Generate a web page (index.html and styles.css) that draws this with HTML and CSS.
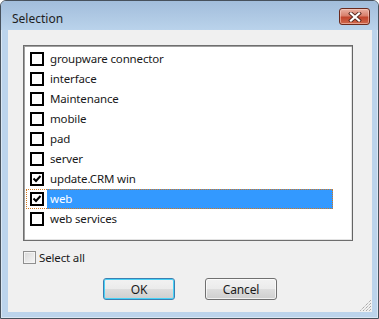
FILE: index.html
```html
<!DOCTYPE html>
<html lang="en">

<head>
    <meta charset="UTF-8">
    <title>Selection</title>
    <link rel="stylesheet" href="styles.css">
</head>

<body>
    <div class="window">
        <div class="titlebar">
            <span class="title">Selection</span>
            <button type="button" class="close-btn">
                <svg width="14" height="10" viewBox="0 0 14 10">
                    <path d="M3 1.5 L11 8.5 M11 1.5 L3 8.5" stroke="#5a2a20" stroke-width="4" stroke-linecap="square" />
                    <path d="M3 1.5 L11 8.5 M11 1.5 L3 8.5" stroke="#ffffff" stroke-width="2.2" stroke-linecap="square" />
                </svg>
            </button>
        </div>

        <div class="client">
            <!-- checked list -->
            <div class="listbox">
                <div class="row"><span class="box"></span><span class="label">groupware connector</span></div>
                <div class="row"><span class="box"></span><span class="label">interface</span></div>
                <div class="row"><span class="box"></span><span class="label">Maintenance</span></div>
                <div class="row"><span class="box"></span><span class="label">mobile</span></div>
                <div class="row"><span class="box"></span><span class="label">pad</span></div>
                <div class="row"><span class="box"></span><span class="label">server</span></div>
                <div class="row">
                    <span class="box">
                        <svg width="10" height="10" viewBox="0 0 10 10"><path d="M1.5 4.5 L4 7 L8.5 2" stroke="#000" stroke-width="2" fill="none" /></svg>
                    </span>
                    <span class="label">update.CRM win</span>
                </div>
                <div class="row selected">
                    <span class="box">
                        <svg width="10" height="10" viewBox="0 0 10 10"><path d="M1.5 4.5 L4 7 L8.5 2" stroke="#000" stroke-width="2" fill="none" /></svg>
                    </span>
                    <span class="label">web</span>
                </div>
                <div class="row"><span class="box"></span><span class="label">web services</span></div>
            </div>

            <label class="select-all">
                <span class="small-box"></span>
                <span>Select all</span>
            </label>

            <div class="buttons">
                <button type="button" class="btn default">OK</button>
                <button type="button" class="btn">Cancel</button>
            </div>

            <svg class="grip" width="12" height="12" viewBox="0 0 12 12">
                <path d="M11 3 L3 11 M11 6 L6 11 M11 9 L9 11 M11 0 L0 11" stroke="#8a8a8a" stroke-width="1" stroke-dasharray="1 1" />
            </svg>
        </div>
    </div>
</body>

</html>
```

FILE: styles.css
```css
* {
    box-sizing: border-box;
}

body {
    margin: 0;
    background: #ffffff;
    font-family: 'Noto Sans', 'DejaVu Sans', sans-serif;
    font-size: 11.5px;
    letter-spacing: -0.15px;
    color: #1a1a1a;
}

.window {
    width: 379px;
    height: 319px;
    border: 1px solid #47515c;
    border-radius: 6px 6px 0 0;
    background: #bcd4ec;
    box-shadow: inset 0 0 0 1px rgba(255, 255, 255, 0.45);
    padding: 0 6px 6px 7px;
    display: flex;
    flex-direction: column;
}

.titlebar {
    height: 29px;
    margin: 0 -6px 0 -7px;
    padding: 0 8px 0 11px;
    border-radius: 5px 5px 0 0;
    background: linear-gradient(#a2bddb, #bad3eb);
    display: flex;
    align-items: center;
    justify-content: space-between;
}

.title {
    font-size: 12px;
    letter-spacing: 0;
    color: #1e1e1e;
    margin-top: 5px;
}

.close-btn {
    width: 31px;
    height: 17px;
    margin-top: 2px;
    padding: 0;
    border: 1px solid #6b2a1d;
    border-radius: 3px;
    background: linear-gradient(#eab1a3 0%, #d8806c 45%, #c2452d 55%, #cf6a4e 100%);
    box-shadow: inset 0 0 0 1px rgba(255, 220, 210, 0.5);
    display: flex;
    align-items: center;
    justify-content: center;
}

.client {
    flex: 1;
    position: relative;
    background: #f0f0f0;
    padding: 15px 18px 0 15px;
    display: flex;
    flex-direction: column;
}

.listbox {
    width: 330px;
    height: 196px;
    background: #ffffff;
    border: 1px solid #6e6e6e;
    border-right-color: #646464;
    box-shadow: inset 1px 1px 0 #a0a0a0, inset -1px -1px 0 #e3e3e3;
    padding: 3px 0 0 2px;
}

.row {
    width: 307px;
    height: 20px;
    display: flex;
    align-items: center;
}

.box {
    width: 14px;
    height: 14px;
    margin-left: 4px;
    border: 2px solid #000;
    background: #fff;
    display: flex;
    align-items: center;
    justify-content: center;
}

.label {
    flex: 1;
    height: 20px;
    line-height: 20px;
    margin-left: 3px;
    padding-left: 3px;
}

.row.selected {
    outline: 1px dotted #d4781e;
    outline-offset: -1px;
}

.row.selected .label {
    background: #3399ff;
    color: #ffffff;
}

.select-all {
    display: flex;
    align-items: center;
    gap: 3px;
    margin-top: 10px;
    height: 13px;
}

.small-box {
    width: 13px;
    height: 13px;
    border: 1px solid #8f8f8f;
    background: linear-gradient(135deg, #d8d8d8, #f6f6f6);
    box-shadow: inset 0 0 0 1px #f4f4f4;
}

.buttons {
    display: flex;
    justify-content: center;
    gap: 30px;
    margin-top: 14px;
    padding-left: 3px;
}

.btn {
    width: 72px;
    height: 22px;
    padding: 0;
    font-family: 'Noto Sans', 'DejaVu Sans', sans-serif;
    font-size: 12px;
    letter-spacing: -0.15px;
    color: #1a1a1a;
    border: 1px solid #707070;
    border-radius: 3px;
    background: linear-gradient(#f2f2f2 0%, #ebebeb 50%, #dddddd 51%, #cfcfcf 100%);
    box-shadow: inset 0 0 0 1px rgba(255, 255, 255, 0.7);
}

.btn.default {
    border-color: #3c7fb1;
    box-shadow: inset 0 0 0 1px #48d2f7;
}

.grip {
    position: absolute;
    right: 0;
    bottom: 0;
}
```
